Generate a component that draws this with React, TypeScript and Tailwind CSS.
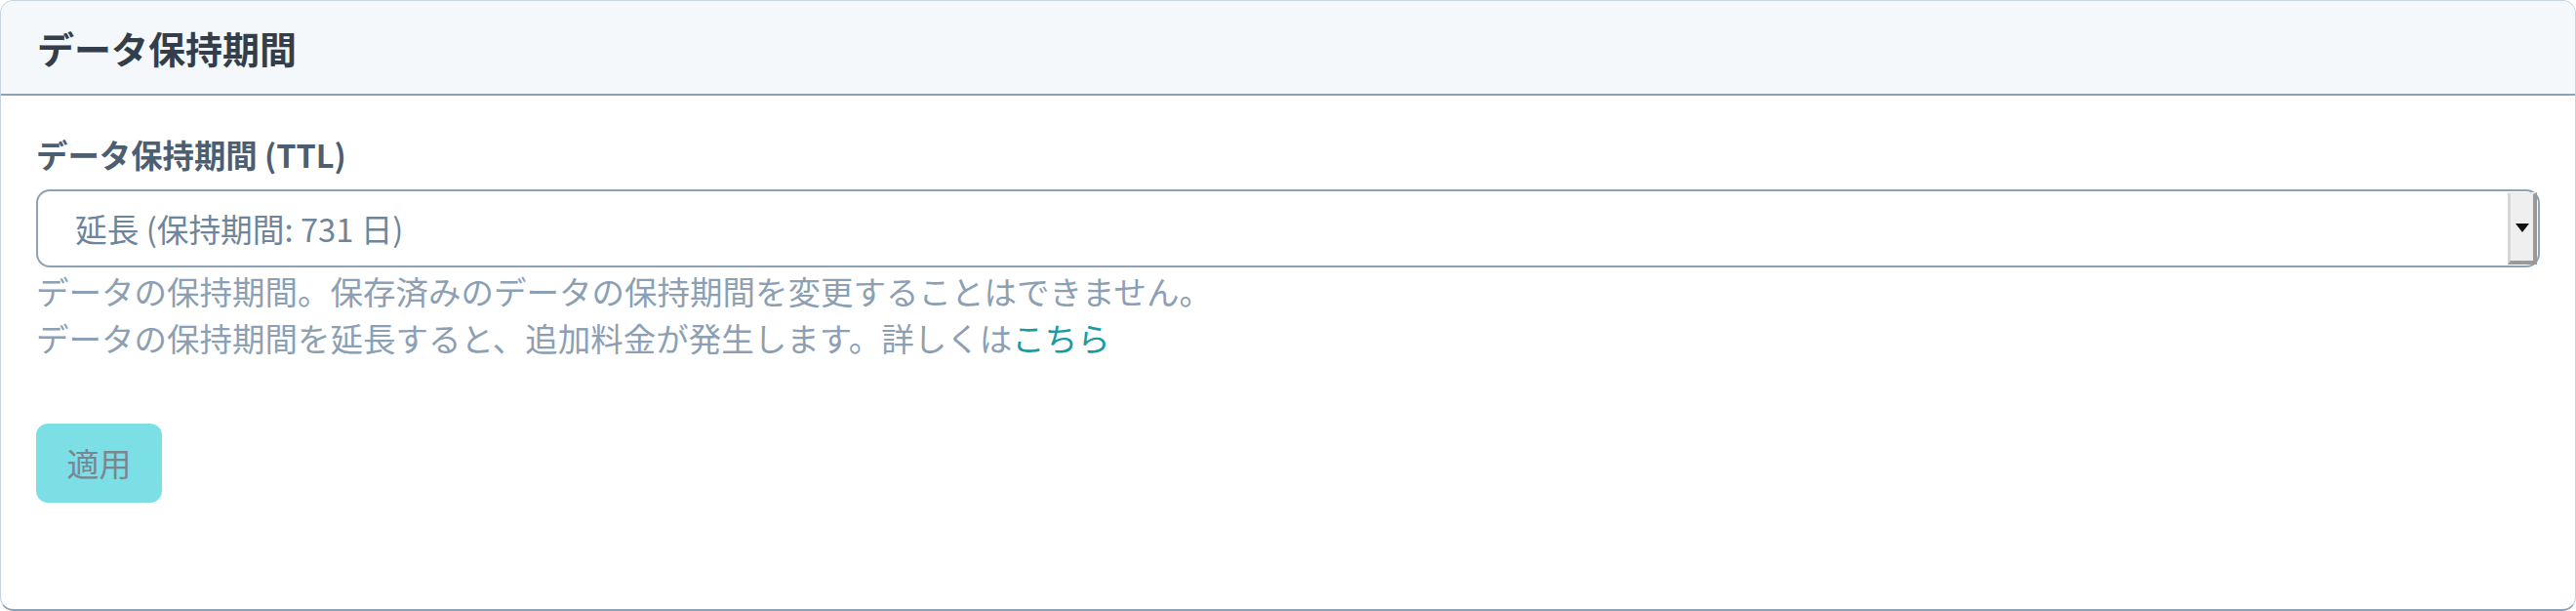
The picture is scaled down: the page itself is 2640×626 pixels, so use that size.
import React from "react";

const font = { fontFamily: '"Noto Sans CJK JP", "Noto Sans", sans-serif' };

const SelectBox = () => (
  <div className="flex h-[80px] w-full items-stretch rounded-[14px] border-2 border-[#8ea2b6] bg-white">
    <div className="flex flex-1 items-center pl-[38px] text-[32.7px] text-[#6f8599]">
      延長 (保持期間: 731 日)
    </div>
    <div className="my-[1px] mr-[1px] flex w-[30px] items-center justify-center border-t-2 border-l-[3px] border-r-[4px] border-b-[4px] border-t-[#ececec] border-l-[#d6d6d6] border-r-[#9a9a9a] border-b-[#9a9a9a] bg-[#efefef]">
      <svg width="14" height="9" viewBox="0 0 14 9">
        <path d="M0 0 H14 L7 9 Z" fill="#111" />
      </svg>
    </div>
  </div>
);

export default function App() {
  return (
    <div style={font} className="h-[626px] w-[2640px] bg-white">
      <div className="flex h-full flex-col overflow-hidden rounded-[14px] border border-b-2 border-[#c9d3dd] border-b-[#8ea2b6] bg-white">
        <div className="flex h-[97px] shrink-0 items-center border-b-2 border-[#8ea2b6] bg-[#f5f8fb] px-[37px]">
          <h2 className="text-[38px] font-bold leading-none text-[#333e4a]">データ保持期間</h2>
        </div>
        <div className="flex flex-col px-[36px] pt-[36px]">
          <label className="text-[32.4px] font-bold leading-[48px] text-[#4c5e71]">
            データ保持期間 (TTL)
          </label>
          <div className="mt-[12px]">
            <SelectBox />
          </div>
          <div className="text-[33.5px] leading-[48px] text-[#8c9fb3]">
            <p>データの保持期間。保存済みのデータの保持期間を変更することはできません。</p>
            <p>
              データの保持期間を延長すると、追加料金が発生します。詳しくは
              <a className="text-[#1c9aa0]">こちら</a>
            </p>
          </div>
          <div className="mt-[64px]">
            <button className="flex h-[81px] w-[129px] items-center justify-center rounded-[12px] bg-[#7cdfe5] text-[33px] text-[#7a8691]">
              適用
            </button>
          </div>
        </div>
      </div>
    </div>
  );
}
